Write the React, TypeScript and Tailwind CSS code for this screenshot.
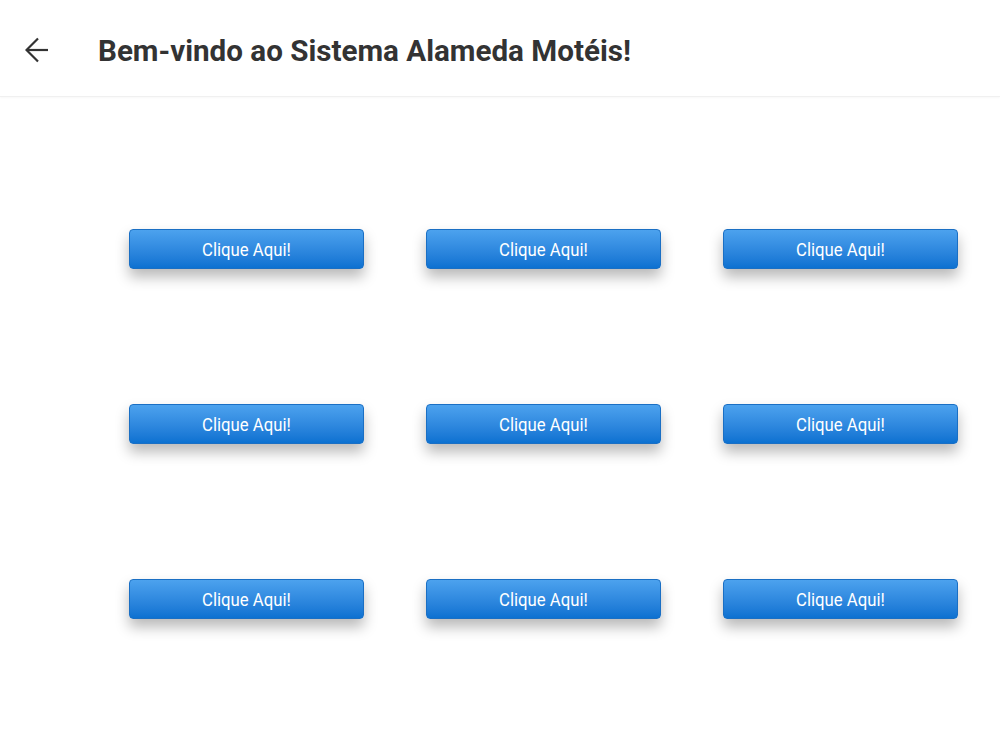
const rows = [0, 1, 2];
const cols = [0, 1, 2];

function ArrowBack() {
	return (
		<svg width="24" height="28" viewBox="0 0 24 28" fill="none" stroke="#333333" strokeWidth="2.2">
			<path d="M23 14H2" />
			<path d="M13 2.5L1.5 14 13 25.5" />
		</svg>
	);
}

function ClickButton() {
	return (
		<button
			type="button"
			className="flex h-[40px] w-[235px] items-center justify-center rounded-[4px] border border-[#1a6fc4] bg-gradient-to-b from-[#4ca2ee] to-[#0b71d1] pt-[2px] shadow-[0_8px_14px_rgba(0,0,0,0.28)]"
		>
			<span className="inline-block scale-x-[0.88] text-[19px] text-white">Clique Aqui!</span>
		</button>
	);
}

export default function App() {
	return (
		<div className="min-h-[750px] w-[1000px] bg-white font-['Roboto',sans-serif]">
			<header className="flex h-[97px] items-center border-b border-[#f0f0f0] pl-[25px] pt-[4px] shadow-[0_1px_2px_rgba(0,0,0,0.03)]">
				<ArrowBack />
				<h1 className="ml-[49px] text-[29.6px] font-bold text-[#333333] pt-[2px]">
					Bem-vindo ao Sistema Alameda Motéis!
				</h1>
			</header>

			<div className="flex flex-col gap-[135px] pl-[129px] pt-[132px]">
				{rows.map((r) => (
					<div key={r} className="flex gap-[62px]">
						{cols.map((c) => (
							<ClickButton key={c} />
						))}
					</div>
				))}
			</div>
		</div>
	);
}
